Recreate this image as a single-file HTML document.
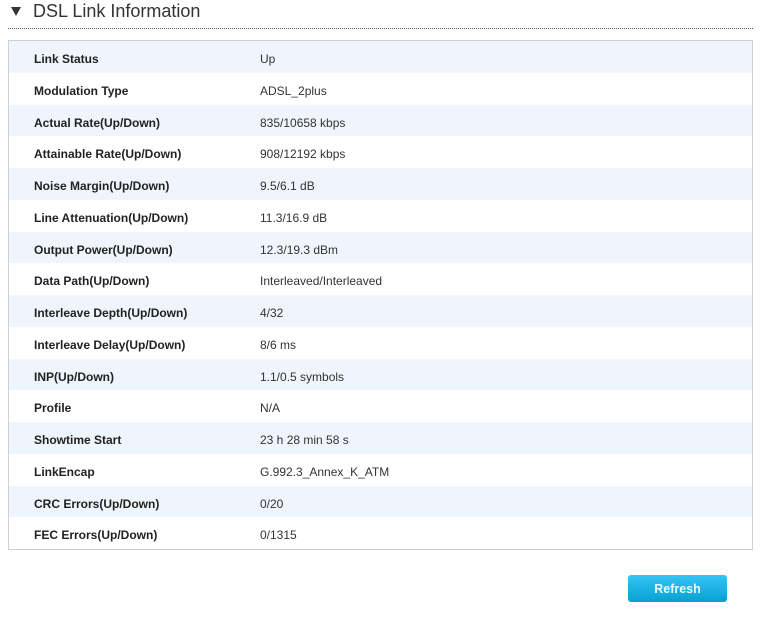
<!DOCTYPE html>
<html><head><style>
body{margin:0;background:#fff;font-family:"Liberation Sans",sans-serif;width:761px;height:619px;position:relative;overflow:hidden}
.tri{position:absolute;left:11px;top:7px;width:0;height:0;border-left:5px solid transparent;border-right:5px solid transparent;border-top:9px solid #333}
.title{position:absolute;left:33px;top:0px;font-size:18px;color:#333;line-height:22px}
.dots{position:absolute;left:8px;top:28px;width:745px;border-top:1px dotted #555}
.box{position:absolute;left:8px;top:40px;width:743px;height:508px;border:1px solid #d0d0d0}
.row{height:31.75px;position:relative;font-size:12px;color:#333}
.row:nth-child(odd){background:#eef5fc}
.l{position:absolute;left:25px;top:11px;font-weight:bold;color:#222}
.v{position:absolute;left:251px;top:11px}
.btn{position:absolute;left:628px;top:575px;width:99px;height:27px;border-radius:3px;background:linear-gradient(#34c5f5,#07a0d3);color:#eefaff;font-weight:bold;font-size:12.5px;text-align:center;line-height:28px}
</style></head><body>
<div class="tri"></div><div class="title">DSL Link Information</div>
<div class="dots"></div>
<div class="box">
<div class="row"><span class="l">Link Status</span><span class="v">Up</span></div>
<div class="row"><span class="l">Modulation Type</span><span class="v">ADSL_2plus</span></div>
<div class="row"><span class="l">Actual Rate(Up/Down)</span><span class="v">835/10658 kbps</span></div>
<div class="row"><span class="l">Attainable Rate(Up/Down)</span><span class="v">908/12192 kbps</span></div>
<div class="row"><span class="l">Noise Margin(Up/Down)</span><span class="v">9.5/6.1 dB</span></div>
<div class="row"><span class="l">Line Attenuation(Up/Down)</span><span class="v">11.3/16.9 dB</span></div>
<div class="row"><span class="l">Output Power(Up/Down)</span><span class="v">12.3/19.3 dBm</span></div>
<div class="row"><span class="l">Data Path(Up/Down)</span><span class="v">Interleaved/Interleaved</span></div>
<div class="row"><span class="l">Interleave Depth(Up/Down)</span><span class="v">4/32</span></div>
<div class="row"><span class="l">Interleave Delay(Up/Down)</span><span class="v">8/6 ms</span></div>
<div class="row"><span class="l">INP(Up/Down)</span><span class="v">1.1/0.5 symbols</span></div>
<div class="row"><span class="l">Profile</span><span class="v">N/A</span></div>
<div class="row"><span class="l">Showtime Start</span><span class="v">23 h 28 min 58 s</span></div>
<div class="row"><span class="l">LinkEncap</span><span class="v">G.992.3_Annex_K_ATM</span></div>
<div class="row"><span class="l">CRC Errors(Up/Down)</span><span class="v">0/20</span></div>
<div class="row"><span class="l">FEC Errors(Up/Down)</span><span class="v">0/1315</span></div>
</div>
<div class="btn">Refresh</div>
</body></html>
